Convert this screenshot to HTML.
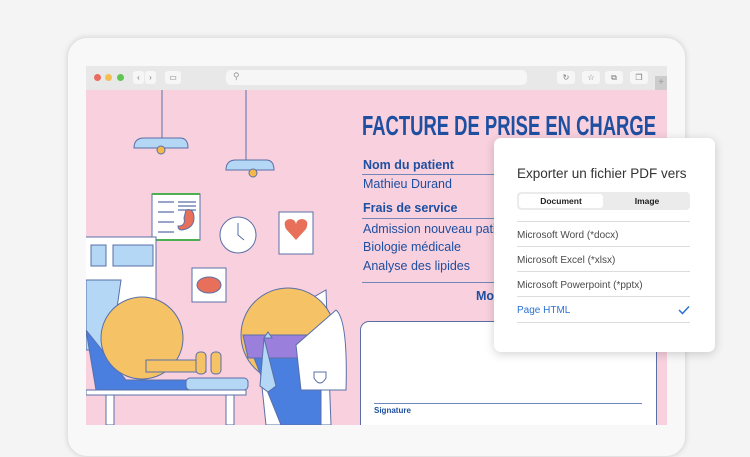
<!DOCTYPE html>
<html><head><meta charset="utf-8"><style>
*{margin:0;padding:0;box-sizing:border-box}
body{width:750px;height:425px;overflow:hidden;background:#f4f4f4;position:relative;font-family:"Liberation Sans",sans-serif}
.dev{position:absolute;left:67px;top:37px;width:619px;height:420px;background:#f8f8f8;border-radius:20px;border:1px solid #e2e2e2;box-shadow:0 0 6px rgba(0,0,0,.12)}
.bar{position:absolute;left:86px;top:66px;width:581px;height:24px;background:#e8e8e8}
.scr{position:absolute;left:86px;top:90px;width:581px;height:335px;background:#f8d0de;overflow:hidden}
.dot{position:absolute;top:74px;width:7px;height:7px;border-radius:50%}
.btn{position:absolute;top:71px;height:13px;background:#f6f6f6;border-radius:3px;font-size:8px;color:#777;text-align:center;line-height:13px}
.url{position:absolute;left:226px;top:70px;width:301px;height:15px;background:#f6f6f6;border-radius:5px}
.t{position:absolute;color:#1e4fa0;white-space:nowrap}
.ln{position:absolute;height:1px;background:#6f86b8}
.pop{position:absolute;left:494px;top:138px;width:221px;height:214px;background:#fff;border-radius:7px;box-shadow:0 2px 10px rgba(0,0,0,.18)}
.pop .it{position:absolute;left:23px;font-size:10px;color:#4a4a4a}
.pop .hl{position:absolute;left:23px;width:173px;height:1px;background:#ddd}
</style></head><body>
<div class="dev"></div>
<div class="bar"></div>
<div class="dot" style="left:94px;background:#ec6a5e"></div>
<div class="dot" style="left:105px;background:#f4bf4f"></div>
<div class="dot" style="left:117px;background:#61c554"></div>
<div class="btn" style="left:133px;width:11px">‹</div>
<div class="btn" style="left:145px;width:11px">›</div>
<div class="btn" style="left:165px;width:16px">▭</div>
<div class="url"><span style="position:absolute;left:7px;top:1px;font-size:9px;color:#999">⚲</span></div>
<div class="btn" style="left:557px;width:18px">↻</div>
<div class="btn" style="left:582px;width:18px">☆</div>
<div class="btn" style="left:605px;width:18px">⧉</div>
<div class="btn" style="left:630px;width:18px">❐</div>
<div style="position:absolute;left:655px;top:76px;width:12px;height:14px;background:#ccc;color:#999;font-size:10px;text-align:center;line-height:14px">+</div>
<div class="scr">
<svg width="581" height="335" style="position:absolute;left:0;top:0" stroke="#5a6fa8" stroke-width="1">
<line x1="76" y1="0" x2="76" y2="48"/><line x1="160" y1="0" x2="160" y2="70"/>
<path d="M48 58 Q48 48 58 48 H94 Q102 48 102 58 Z" fill="#b3d7f5"/><circle cx="75" cy="60" r="4" fill="#f5b94a"/>
<path d="M140 80 Q140 70 150 70 H180 Q188 70 188 80 Z" fill="#b3d7f5"/><circle cx="167" cy="83" r="4" fill="#f5b94a"/>
<rect x="66" y="104" width="48" height="46" fill="#fff"/><line x1="66" y1="104" x2="114" y2="104" stroke="#4caf50" stroke-width="2"/><line x1="66" y1="150" x2="114" y2="150" stroke="#4caf50" stroke-width="2"/>
<path d="M72 112h16M72 122h16M72 132h16M72 142h16M92 112h18M92 116h18M92 120h18" stroke-width="1.2"/>
<path d="M100 120 q8 -2 8 8 q0 10 -12 12 q-4 0 -4 -4 q8 0 6 -8 z" fill="#e8705a"/>
<circle cx="152" cy="145" r="18" fill="#fff"/><path d="M152 133 V145 L158 150" fill="none"/>
<rect x="193" y="122" width="34" height="42" fill="#fff"/><path d="M210 150 L200 139 Q196 130 204 129 Q209 129 210 134 Q211 129 216 129 Q224 130 220 139 Z" fill="#e8705a" stroke="none"/>
<rect x="106" y="178" width="34" height="34" fill="#fff"/><ellipse cx="123" cy="195" rx="12" ry="8" fill="#e8705a"/>
<rect x="-2" y="147" width="72" height="70" fill="#fff"/><rect x="5" y="155" width="15" height="21" fill="#b3d7f5"/><rect x="27" y="155" width="40" height="21" fill="#b3d7f5"/>
<path d="M0 190 H35 L25 260 H0Z" fill="#b3d7f5"/>
<path d="M0 240 L10 300 H160 V290 H40 Z" fill="#4a7fe0"/>
<rect x="100" y="288" width="62" height="12" rx="4" fill="#b3d7f5"/>
<rect x="0" y="300" width="160" height="5" fill="#fff"/><rect x="20" y="305" width="8" height="30" fill="#fff"/><rect x="140" y="305" width="8" height="30" fill="#fff"/>
<circle cx="56" cy="248" r="41" fill="#f5c266"/>
<path d="M60 270 H120 V282 H60Z" fill="#f5c266"/><rect x="110" y="262" width="10" height="22" rx="4" fill="#f5c266"/><rect x="125" y="262" width="10" height="22" rx="4" fill="#f5c266"/>
<path d="M240 200 L245 335 H180 L170 240 Z" fill="#fff"/>
<circle cx="202" cy="245" r="47" fill="#f5c266"/>
<path d="M157 245 H248 V268 H162 Z" fill="#9b7fdc"/>
<path d="M168 268 H235 V335 H195 Z" fill="#4a7fe0"/>
<path d="M182 242 L178 248 L186 248 Z M178 248 L174 296 L182 302 L190 296 Z" fill="#b3d7f5"/>
<path d="M250 220 Q262 230 260 300 H215 L210 255 Z" fill="#fff"/>
<path d="M228 282 h12 v6 q-6 10 -12 0z" fill="#fff"/>
<text x="276" y="45" textLength="294" lengthAdjust="spacingAndGlyphs" font-family="Liberation Sans" font-weight="bold" font-size="28" fill="#1e4fa0" stroke="none">FACTURE DE PRISE EN CHARGE</text>
</svg>
<div class="t" style="left:277px;top:68px;font-size:12.5px;font-weight:bold">Nom du patient</div>
<div class="ln" style="left:276px;top:84px;width:320px"></div>
<div class="t" style="left:277px;top:87px;font-size:12.5px">Mathieu Durand</div>
<div class="t" style="left:277px;top:111px;font-size:12.5px;font-weight:bold">Frais de service</div>
<div class="ln" style="left:276px;top:128px;width:320px"></div>
<div class="t" style="left:277px;top:132px;font-size:12.5px">Admission nouveau patient</div>
<div class="t" style="left:277px;top:150px;font-size:12.5px">Biologie médicale</div>
<div class="t" style="left:277px;top:169px;font-size:12.5px">Analyse des lipides</div>
<div class="ln" style="left:276px;top:192px;width:320px"></div>
<div class="t" style="left:390px;top:199px;font-size:12.5px;font-weight:bold">Mo</div>
<div style="position:absolute;left:274px;top:231px;width:297px;height:120px;background:#fff;border:1px solid #5a6fa8;border-radius:9px"></div>
<div class="ln" style="left:288px;top:313px;width:268px"></div>
<div class="t" style="left:288px;top:316px;font-size:8px;font-weight:bold">Signature</div>
</div>
<div class="pop">
<div style="position:absolute;left:23px;top:28px;font-size:13.5px;color:#333">Exporter un fichier PDF vers</div>
<div style="position:absolute;left:23px;top:54px;width:173px;height:18px;background:#ebebeb;border-radius:4px">
<div style="position:absolute;left:2px;top:2px;width:84px;height:14px;background:#fff;border-radius:3px;font-size:8.5px;font-weight:bold;text-align:center;line-height:14px;color:#222">Document</div>
<div style="position:absolute;left:88px;top:2px;width:84px;height:14px;font-size:8.5px;font-weight:bold;text-align:center;line-height:14px;color:#222">Image</div>
</div>
<div class="hl" style="top:83px"></div>
<div class="it" style="top:92px">Microsoft Word (*docx)</div>
<div class="hl" style="top:108px"></div>
<div class="it" style="top:117px">Microsoft Excel (*xlsx)</div>
<div class="hl" style="top:133px"></div>
<div class="it" style="top:142px">Microsoft Powerpoint (*pptx)</div>
<div class="hl" style="top:158px"></div>
<div class="it" style="top:167px;color:#2a72d4">Page HTML</div>
<svg style="position:absolute;left:184px;top:167px" width="12" height="10"><path d="M1 5 L4.5 8.5 L11 1.5" fill="none" stroke="#2a72d4" stroke-width="1.5"/></svg>
<div class="hl" style="top:184px"></div>
</div>
</body></html>
